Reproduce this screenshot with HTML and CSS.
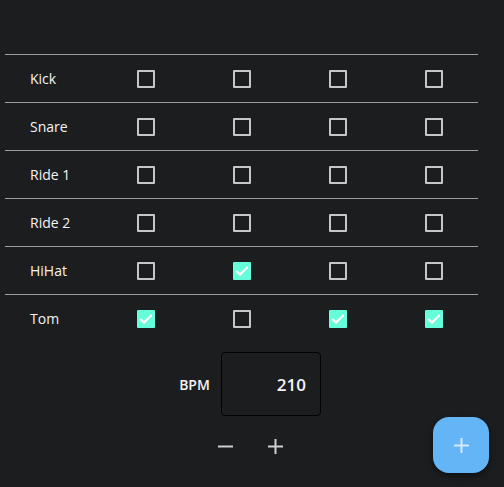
FILE: index.html
```html
<!DOCTYPE html>
<html>
<head>
<meta charset="utf-8">
<link rel="stylesheet" href="styles.css">
</head>
<body>
<div class="page">
  <div class="grid">
    <div class="row"><div class="label">Kick</div><div class="cell"><span class="cb"></span></div><div class="cell"><span class="cb"></span></div><div class="cell"><span class="cb"></span></div><div class="cell"><span class="cb"></span></div></div>
    <div class="row"><div class="label">Snare</div><div class="cell"><span class="cb"></span></div><div class="cell"><span class="cb"></span></div><div class="cell"><span class="cb"></span></div><div class="cell"><span class="cb"></span></div></div>
    <div class="row"><div class="label">Ride 1</div><div class="cell"><span class="cb"></span></div><div class="cell"><span class="cb"></span></div><div class="cell"><span class="cb"></span></div><div class="cell"><span class="cb"></span></div></div>
    <div class="row"><div class="label">Ride 2</div><div class="cell"><span class="cb"></span></div><div class="cell"><span class="cb"></span></div><div class="cell"><span class="cb"></span></div><div class="cell"><span class="cb"></span></div></div>
    <div class="row"><div class="label">HiHat</div><div class="cell"><span class="cb"></span></div><div class="cell"><span class="cb on"><svg viewBox="0 0 18 18"><path d="M3.3 9 L7 12.6 L14.6 5"/></svg></span></div><div class="cell"><span class="cb"></span></div><div class="cell"><span class="cb"></span></div></div>
    <div class="row"><div class="label">Tom</div><div class="cell"><span class="cb on"><svg viewBox="0 0 18 18"><path d="M3.3 9 L7 12.6 L14.6 5"/></svg></span></div><div class="cell"><span class="cb"></span></div><div class="cell"><span class="cb on"><svg viewBox="0 0 18 18"><path d="M3.3 9 L7 12.6 L14.6 5"/></svg></span></div><div class="cell"><span class="cb on"><svg viewBox="0 0 18 18"><path d="M3.3 9 L7 12.6 L14.6 5"/></svg></span></div></div>
  </div>
  <div class="bpm">
    <span class="bpm-label">BPM</span>
    <div class="bpm-box">210</div>
  </div>
  <div class="steppers">
    <button class="icon-btn" aria-label="decrease"><svg viewBox="0 0 15 15"><path d="M0 7.5 H15"/></svg></button>
    <button class="icon-btn" aria-label="increase"><svg viewBox="0 0 15 15"><path d="M0 7.5 H15 M7.5 0 V15"/></svg></button>
  </div>
</div>
<button class="fab" aria-label="add"><svg viewBox="0 0 15 15"><path d="M0 7.5 H15 M7.5 0 V15"/></svg></button>
</body>
</html>
```
FILE: styles.css
```css
html, body {
  margin: 0;
  padding: 0;
  background: #1c1d1f;
  height: 100%;
  overflow: hidden;
}
body {
  font-family: "Open Sans", "Noto Sans", sans-serif;
  color: #f4f4f4;
}
.page {
  width: 500px;
  padding-top: 54px;
}
.grid {
  margin-left: 5px;
  width: 473px;
}
.row {
  display: grid;
  grid-template-columns: 93px repeat(4, 96px);
  height: 47px;
  border-top: 1px solid #9d9da0;
  align-items: center;
}
.label {
  padding-left: 25px;
  font-size: 14px;
}
.cell {
  display: flex;
  justify-content: center;
  align-items: center;
}
.cb {
  box-sizing: border-box;
  width: 18px;
  height: 18px;
  border: 2px solid #c6c6c6;
  border-radius: 1px;
  display: block;
}
.cb.on {
  border: none;
  background: #64ffda;
}
.cb svg {
  width: 18px;
  height: 18px;
  display: block;
}
.cb svg path {
  fill: none;
  stroke: #ffffff;
  stroke-width: 2.2;
}
.bpm {
  display: flex;
  justify-content: center;
  align-items: center;
  gap: 11px;
  margin-top: 10px;
}
.bpm-label {
  font-size: 14px;
  font-weight: 600;
}
.bpm-box {
  box-sizing: border-box;
  width: 100px;
  height: 64px;
  border: 1px solid #020202;
  border-radius: 4px;
  display: flex;
  align-items: center;
  justify-content: flex-end;
  padding-right: 14px;
  font-size: 17px;
  font-weight: 600;
}
.steppers {
  display: flex;
  justify-content: center;
  gap: 10px;
  margin-top: 10px;
}
.icon-btn {
  width: 40px;
  height: 40px;
  padding: 0;
  border: none;
  background: transparent;
  display: flex;
  align-items: center;
  justify-content: center;
}
.icon-btn svg, .fab svg {
  width: 15px;
  height: 15px;
  display: block;
}
.icon-btn svg path {
  stroke: #cfcfd2;
  stroke-width: 2;
  fill: none;
}
.fab {
  position: absolute;
  left: 433px;
  top: 417px;
  width: 56px;
  height: 56px;
  border-radius: 16px;
  border: none;
  padding: 0;
  background: #64b5f6;
  box-shadow: 0 3px 6px rgba(0,0,0,0.45);
  display: flex;
  align-items: center;
  justify-content: center;
}
.fab svg path {
  stroke: #d8e8fb;
  stroke-width: 2;
  fill: none;
}
```
